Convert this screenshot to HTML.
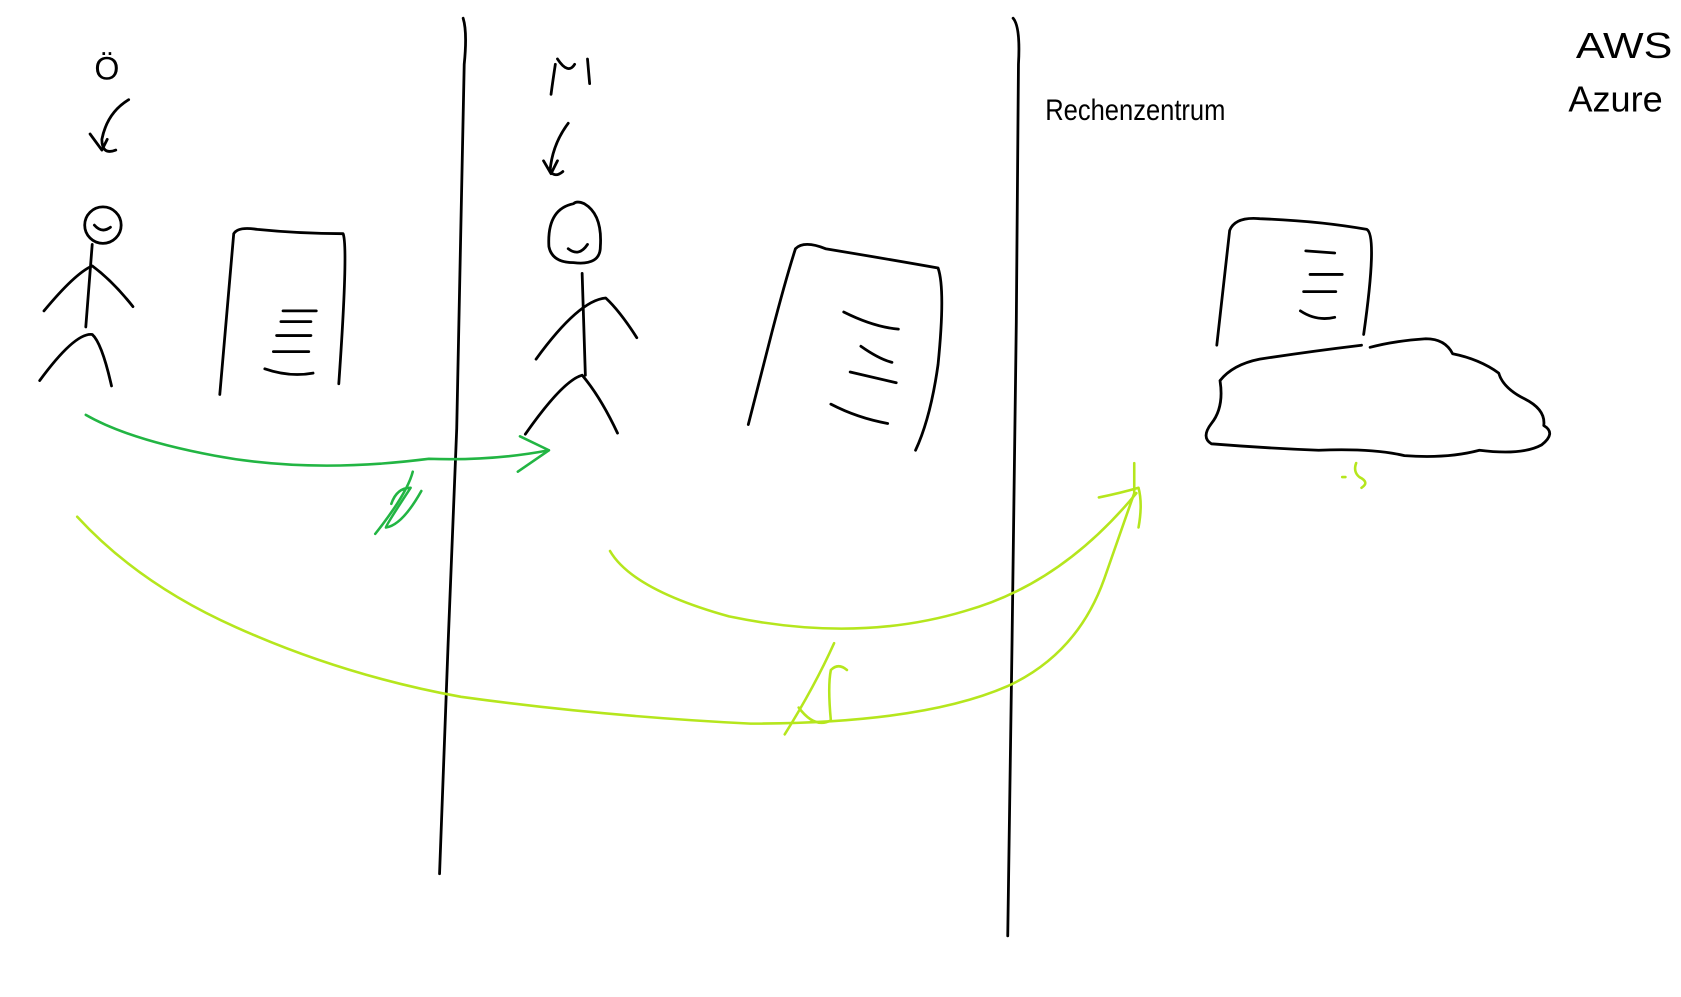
<!DOCTYPE html>
<html><head><meta charset="utf-8"><style>
html,body{margin:0;padding:0;background:#fff;width:1681px;height:997px;overflow:hidden}
svg{display:block}
text{font-family:"Liberation Sans",sans-serif;fill:#000}
</style></head><body>
<svg width="1681" height="997" viewBox="0 0 1568 930" xmlns="http://www.w3.org/2000/svg" fill="none" stroke-linecap="round" stroke-linejoin="round">
<g stroke="#000" stroke-width="2.6">
<path d="M432 17 Q436 30 433 60 L426 400 L418 600 L410 815"/>
<path d="M945 17 Q952 25 950 60 L948 300 L944 600 L940 873"/>
<path d="M120 93 Q100 105 95 130 Q95 145 108 140"/>
<path d="M84 125 L95 140 L100 130"/>
<circle cx="96" cy="210" r="17"/>
<path d="M88 210 Q95 218 103 212"/>
<path d="M86 228 L80 305"/><path d="M41 290 Q70 255 86 248 Q105 262 124 286"/>
<path d="M37 355 Q70 310 86 312 Q95 320 104 360"/>
<path d="M205 368 L218 218 Q222 211 240 214 Q280 218 320 218 Q325 230 316 358"/>
<path d="M264 290 L295 290 M262 300 L290 300 M258 313 L290 313 M255 328 L288 328 M247 344 Q270 352 292 348"/>
<path d="M518 60 Q515 80 514 88 M520 55 Q530 70 536 60 M548 55 L550 78"/>
<path d="M530 115 Q515 135 513 160 Q518 166 525 160"/>
<path d="M507 150 L514 162 L520 150"/>
<path d="M535 190 Q510 195 512 230 Q515 245 535 245 Q560 248 560 230 Q562 200 545 190 Q538 187 535 190Z"/>
<path d="M530 232 Q540 240 548 228"/>
<path d="M543 255 L546 350"/><path d="M500 335 Q540 280 565 278 Q578 290 594 315"/>
<path d="M490 405 Q525 355 543 350 Q560 370 576 404"/>
<path d="M698 396 L720 310 Q733 260 742 232 Q750 224 770 232 Q830 242 875 250 Q882 270 875 340 Q868 390 854 420"/>
<path d="M787 291 Q815 305 838 307 M803 323 Q820 335 832 338 M793 347 L836 357 M775 377 Q800 390 828 395"/>
<path d="M1135 322 L1147 215 Q1152 202 1175 204 Q1230 206 1275 214 Q1285 220 1272 312"/>
<path d="M1218 234 L1245 236 M1222 256 L1252 256 M1216 272 L1246 272 M1213 290 Q1228 300 1245 296"/>
<path d="M1278 324 Q1300 318 1330 316 Q1348 316 1355 330 Q1380 335 1398 348 Q1402 362 1422 372 Q1442 382 1440 397 Q1452 404 1438 415 Q1420 425 1380 420 Q1350 428 1310 425 Q1280 418 1230 420 Q1180 418 1130 414 Q1120 408 1130 395 Q1142 380 1138 355 Q1150 340 1175 335 Q1220 328 1270 322"/>
</g>
<g stroke="#22b543" stroke-width="2.4">
<path d="M80 387 Q120 410 200 425 Q290 442 400 428 Q460 430 512 420"/>
<path d="M485 407 L512 420 L483 440"/>
<path d="M350 498 Q380 460 385 440 M365 470 Q370 455 383 455 Q360 490 360 492 Q375 490 393 458"/>
</g>
<g stroke="#b5e61d" stroke-width="2.4">
<path d="M72 482 Q130 545 220 585 Q320 630 430 650 Q560 668 700 675 Q860 675 940 640 Q1005 610 1030 540 L1058 460"/>
<path d="M569 514 Q590 550 680 575 Q800 600 900 570 Q990 545 1060 460"/>
<path d="M1025 464 Q1045 460 1062 455 Q1066 470 1062 492 M1058 432 L1058 460"/>
<path d="M732 685 Q760 640 778 600 M745 660 Q760 680 775 672 Q772 640 775 625 Q782 618 790 625"/>
<path d="M1252 445 L1255 445 M1265 432 Q1262 440 1268 445 Q1278 450 1270 455"/>
</g>
<text x="1470" y="54" font-size="34" textLength="90" lengthAdjust="spacingAndGlyphs">AWS</text>
<text x="1463" y="104" font-size="34" textLength="88" lengthAdjust="spacingAndGlyphs">Azure</text>
<text x="975" y="112" font-size="28" textLength="168" lengthAdjust="spacingAndGlyphs">Rechenzentrum</text>
<text x="88" y="74" font-size="30">Ö</text>
</svg>
</body></html>
